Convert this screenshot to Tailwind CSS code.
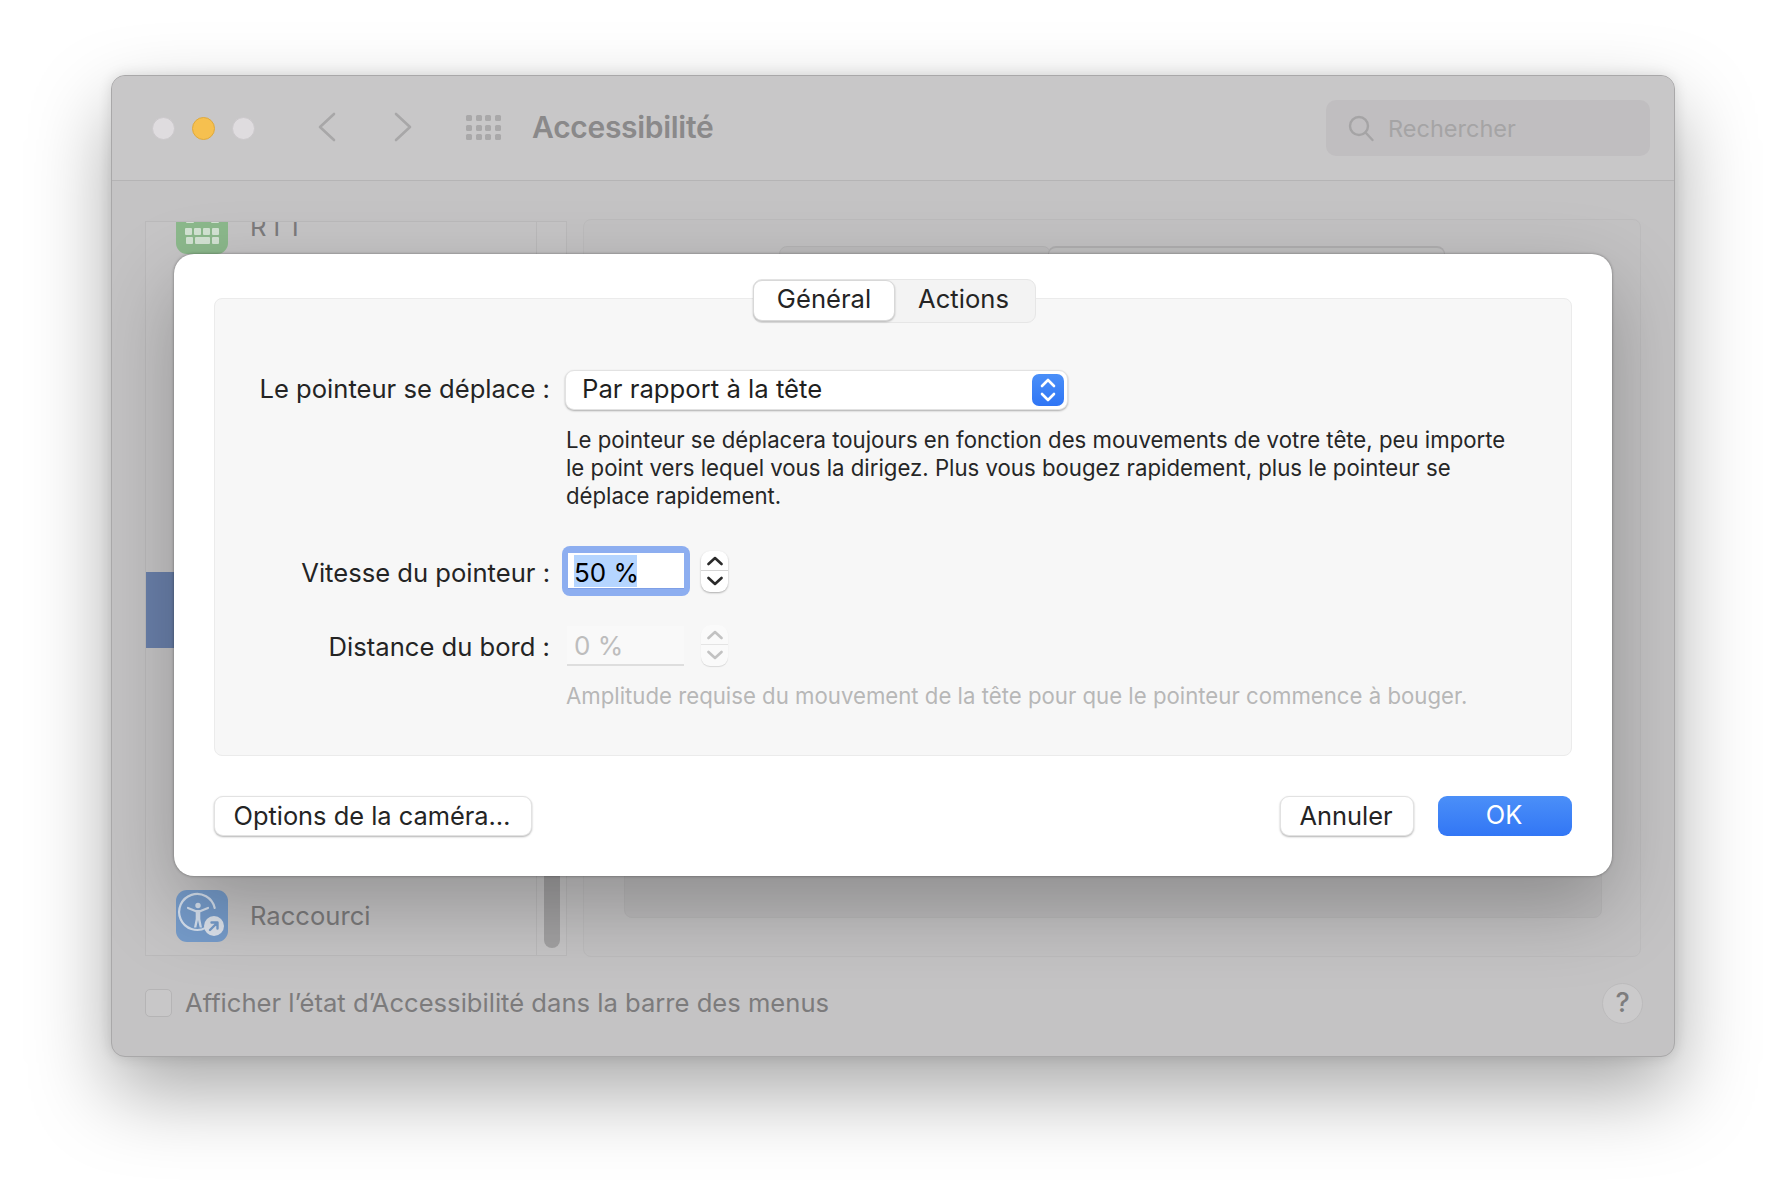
<!DOCTYPE html>
<html lang="fr">
<head>
    <meta charset="UTF-8">
    <title>Accessibilité</title>
    <script src="https://cdn.jsdelivr.net/npm/@tailwindcss/browser@4"></script>
</head>
<body class="bg-white w-[1786px] h-[1204px] overflow-hidden pl-[111px] pt-[75px] font-['Inter','Liberation_Sans',sans-serif] text-[#242424]">

    <!-- fenetre -->
    <div class="relative w-[1564px] h-[982px] rounded-[14px] overflow-hidden flex flex-col bg-[#c4c3c4] border border-[#a9a8a9] shadow-[0_35px_80px_rgba(0,0,0,0.34),0_0_14px_rgba(0,0,0,0.12)]">

        <!-- barre de titre -->
        <div class="h-[105px] shrink-0 flex items-center bg-[#c8c7c8] border-b border-[#b5b4b5] pl-[40px] pr-[24px]">
            <div class="flex gap-[17px]">
                <span class="w-[23px] h-[23px] rounded-full bg-[#dfdcdf] border border-[#cbc8cb]"></span>
                <span class="w-[23px] h-[23px] rounded-full bg-[#f6c04f] border border-[#dfa93c]"></span>
                <span class="w-[23px] h-[23px] rounded-full bg-[#dfdcdf] border border-[#cbc8cb]"></span>
            </div>
            <svg class="ml-[62px] -mt-[2px]" width="20" height="30" viewBox="0 0 20 30" fill="none" stroke="#a8a7a8" stroke-width="2.600" stroke-linecap="round" stroke-linejoin="round"><path d="M17 2 3 15l14 13"/></svg>
            <svg class="ml-[56px] -mt-[2px]" width="20" height="30" viewBox="0 0 20 30" fill="none" stroke="#a8a7a8" stroke-width="2.600" stroke-linecap="round" stroke-linejoin="round"><path d="m3 2 14 13L3 28"/></svg>
            <div class="ml-[53px] -mt-[1px] grid grid-cols-4 gap-x-[3.700px] gap-y-[3.500px]">
                <span class="w-[6px] h-[6px] bg-[#a9a8a9] rounded-[1.500px]"></span><span class="w-[6px] h-[6px] bg-[#a9a8a9] rounded-[1.500px]"></span><span class="w-[6px] h-[6px] bg-[#a9a8a9] rounded-[1.500px]"></span><span class="w-[6px] h-[6px] bg-[#a9a8a9] rounded-[1.500px]"></span>
                <span class="w-[6px] h-[6px] bg-[#a9a8a9] rounded-[1.500px]"></span><span class="w-[6px] h-[6px] bg-[#a9a8a9] rounded-[1.500px]"></span><span class="w-[6px] h-[6px] bg-[#a9a8a9] rounded-[1.500px]"></span><span class="w-[6px] h-[6px] bg-[#a9a8a9] rounded-[1.500px]"></span>
                <span class="w-[6px] h-[6px] bg-[#a9a8a9] rounded-[1.500px]"></span><span class="w-[6px] h-[6px] bg-[#a9a8a9] rounded-[1.500px]"></span><span class="w-[6px] h-[6px] bg-[#a9a8a9] rounded-[1.500px]"></span><span class="w-[6px] h-[6px] bg-[#a9a8a9] rounded-[1.500px]"></span>
            </div>
            <div class="ml-[31px] -mt-[2px] text-[30px] font-semibold text-[#8a898a] tracking-[-0.3px]">Accessibilité</div>
            <div class="ml-auto w-[324px] h-[56px] rounded-[10px] bg-[#c0bec0] flex items-center pl-[21px]">
                <svg width="28" height="28" viewBox="0 0 28 28" fill="none" stroke="#a5a4a5" stroke-width="2.400" stroke-linecap="round"><circle cx="12" cy="12" r="9"/><path d="m18.500 18.500 7 7.500"/></svg>
                <span class="ml-[13px] mt-[2px] text-[23.500px] text-[#a5a4a5]">Rechercher</span>
            </div>
        </div>

        <!-- contenu derriere la feuille -->
        <div class="flex-1 flex flex-col px-[33px]">
            <div class="flex h-[738px] mt-[38px] gap-[16px]">
                <div class="w-[422px] h-[735px] mt-[2px] flex bg-[#c6c5c6] border border-[#bbbabb]">
                    <div class="relative flex-1 border-r border-[#bbbabb] overflow-hidden flex flex-col justify-between">
                        <div class="flex items-start pl-[30px] h-[60px]">
                            <div class="w-[52px] h-[52px] -mt-[20px] shrink-0 rounded-[11px] bg-[#8cb98c] flex flex-col items-center pt-[14px] gap-[2px]">
                                <div class="w-[33px] flex justify-between">
                                    <span class="w-[8px] h-[7px] bg-[#d3e3d3] rounded-[1px]"></span><span class="w-[8px] h-[7px] bg-[#d3e3d3] rounded-[1px]"></span>
                                </div>
                                <div class="mt-[3px] flex gap-[2px]">
                                    <span class="w-[7px] h-[7px] bg-[#d3e3d3] rounded-[1px]"></span><span class="w-[7px] h-[7px] bg-[#d3e3d3] rounded-[1px]"></span><span class="w-[7px] h-[7px] bg-[#d3e3d3] rounded-[1px]"></span><span class="w-[7px] h-[7px] bg-[#d3e3d3] rounded-[1px]"></span>
                                </div>
                                <div class="flex gap-[2px]">
                                    <span class="w-[7px] h-[7px] bg-[#d3e3d3] rounded-[1px]"></span><span class="w-[15px] h-[7px] bg-[#d3e3d3] rounded-[1px]"></span><span class="w-[7px] h-[7px] bg-[#d3e3d3] rounded-[1px]"></span>
                                </div>
                            </div>
                            <span class="ml-[22px] -mt-[9px] text-[25.600px] leading-[28px] tracking-[2px] text-[#7c7b7c]">RTT</span>
                        </div>
                        <div class="absolute left-0 top-[350px] w-[40px] h-[76px] bg-[#6a80ab]"></div>
                        <div class="flex items-center pl-[30px] mb-[13px]">
                            <svg width="52" height="52" viewBox="0 0 52 52" class="rounded-[11px] bg-[#769ccb]">
                                <path d="M30 37.600A18 18 0 1 1 38.700 18" fill="none" stroke="#d5e0ee" stroke-width="2.200" stroke-linecap="round"/>
                                <circle cx="22" cy="15.500" r="2.700" fill="#d5e0ee"/>
                                <path d="M12 18l8 3.200h4l8-3.200" fill="none" stroke="#d5e0ee" stroke-width="2.200" stroke-linecap="round" stroke-linejoin="round"/>
                                <path d="M19.700 21h4.600v8l1.700 8.500h-2.300l-1.700-7.500-1.700 7.500H18l1.700-8.500z" fill="#d5e0ee"/>
                                <circle cx="38" cy="36" r="10" fill="#dde3ec"/>
                                <path d="m34 40 7.500-7.500m-6 0h6v6" fill="none" stroke="#769ccb" stroke-width="2.400" stroke-linecap="round" stroke-linejoin="round"/>
                            </svg>
                            <span class="ml-[22px] text-[25.600px] text-[#7c7b7c]">Raccourci</span>
                        </div>
                    </div>
                    <div class="w-[29px] flex justify-center items-end pb-[7px]">
                        <div class="w-[16px] h-[400px] rounded-full bg-[#a2a1a2]"></div>
                    </div>
                </div>
                <div class="w-[1058px] h-[738px] rounded-[8px] bg-[#c3c2c3] border border-[#bdbcbd] pt-[49px] pl-[40px] pr-[38px]">
                    <div class="relative h-[649px] w-[978px] rounded-[8px] bg-[#bdbcbd] border border-[#b9b8b9]">
                        <div class="absolute -top-[24px] left-[154px] w-[272px] h-[44px] rounded-t-[8px] bg-[#bdbcbd] border border-[#b5b4b5]"></div>
                        <div class="absolute -top-[24px] left-[423px] w-[397px] h-[44px] rounded-t-[8px] bg-[#c1c0c1] border-t-2 border-x border-[#b0afb0]"></div>
                    </div>
                </div>
            </div>
            <div class="flex items-center mt-[26px]">
                <span class="w-[27px] h-[28px] -mt-[2px] rounded-[5px] bg-[#c8c7c8] border border-[#b5b4b5]"></span>
                <span class="ml-[13px] text-[25.600px] text-[#7c7b7c]">Afficher l’état d’Accessibilité dans la barre des menus</span>
                <span class="ml-auto -mr-[2px] w-[41px] h-[41px] rounded-full bg-[#cbcacb] border border-[#bcbbbc] flex items-center justify-center text-[27px] font-medium text-[#7e7d7e]">?</span>
            </div>
        </div>

        <!-- feuille -->
        <div class="absolute left-[62px] top-[177px] mt-[1px] w-[1438px] h-[622px] rounded-[20px] bg-white shadow-[0_30px_80px_rgba(0,0,0,0.26),0_0_3px_rgba(0,0,0,0.4)] px-[40px] pt-[44px]">
            <div class="relative h-[458px] rounded-[8px] bg-[#f7f7f7] border border-[#ebebeb]">
                <div class="absolute -top-[20px] left-[538px] flex h-[44px] w-[283px] rounded-[9px] bg-[#f3f3f3] border border-[#e6e6e6]">
                    <div class="w-[142px] h-[41px] -ml-[1px] pb-[2px] rounded-[9px] bg-white border border-[#d8d8d8] shadow-[0_1px_2px_rgba(0,0,0,0.25)] flex items-center justify-center text-[25.600px]">Général</div>
                    <div class="flex-1 h-[41px] pb-[2px] pr-[3px] flex items-center justify-center text-[25.600px]">Actions</div>
                </div>

                <div class="w-[1000px] pt-[71px] grid grid-cols-[335px_1fr] gap-x-[15px] absolute left-0 top-0">
                    <div class="text-right text-[25.600px] leading-[40px] -mt-[1px]">Le pointeur se déplace :</div>
                    <div class="w-[503px] h-[40px] rounded-[9px] bg-white border border-[#e2e2e2] shadow-[0_1px_2px_rgba(0,0,0,0.3)] flex items-center pl-[16px] pr-[3px] text-[25.700px] text-[#1f1f1f]">
                        <span class="-mt-[2px]">Par rapport à la tête</span>
                        <span class="ml-auto w-[32px] h-[32px] rounded-[7px] bg-gradient-to-b from-[#4a8ff8] to-[#2f75f5] flex items-center justify-center">
                            <svg width="18" height="26" viewBox="0 0 18 26" fill="none" stroke="#fff" stroke-width="2.600" stroke-linecap="round" stroke-linejoin="round"><path d="m3 9 6-6 6 6M3 17l6 6 6-6"/></svg>
                        </span>
                    </div>
                </div>

                <div class="absolute left-[351px] top-[127px] w-[1000px] text-[22.200px] leading-[28px] text-[#262626]">Le pointeur se déplacera toujours en fonction des mouvements de votre tête, peu importe<br>le point vers lequel vous la dirigez. Plus vous bougez rapidement, plus le pointeur se<br>déplace rapidement.</div>

                <div class="absolute left-0 top-[249px] w-[335px] text-right text-[25.600px] leading-[50px]">Vitesse du pointeur :</div>
                <div class="absolute left-[347px] top-[247px] w-[128px] h-[50px] rounded-[8px] bg-[#8daef0] px-[6px] py-[7px]">
                    <div class="w-full h-full bg-white border-b border-[#7f9fe6] flex items-center pl-[6px] text-[26px] text-black">
                        <span class="bg-[#b5d5ff] h-[32px] leading-[36px] w-[63px] whitespace-nowrap">50 %</span>
                    </div>
                </div>
                <div class="absolute left-[486px] top-[252px] w-[27px] h-[41px] rounded-[9px] bg-white shadow-[0_1px_2px_rgba(0,0,0,0.3)] flex flex-col items-center">
                    <svg class="mt-[5px]" width="16" height="10" viewBox="0 0 16 10" fill="none" stroke="#2a2a2a" stroke-width="2.600" stroke-linecap="round" stroke-linejoin="round"><path d="m1.500 8 6.500-6 6.500 6"/></svg>
                    <div class="w-full h-[1px] bg-[#d5d5d5] mt-[4px]"></div>
                    <svg class="mt-[5px]" width="16" height="10" viewBox="0 0 16 10" fill="none" stroke="#2a2a2a" stroke-width="2.600" stroke-linecap="round" stroke-linejoin="round"><path d="m1.500 2 6.500 6 6.500-6"/></svg>
                </div>

                <div class="absolute left-0 top-[328px] w-[335px] text-right text-[25.600px] leading-[40px]">Distance du bord :</div>
                <div class="absolute left-[352px] top-[327px] w-[117px] h-[40px] bg-[#f9f9f9] border-b-2 border-[#dedede] flex items-center pl-[7px] text-[26px] text-[#bdbdbd]">0 %</div>
                <div class="absolute left-[486px] top-[326px] w-[27px] h-[41px] rounded-[9px] bg-[#fafafa] shadow-[0_1px_1px_rgba(0,0,0,0.12)] flex flex-col items-center">
                    <svg class="mt-[5px]" width="16" height="10" viewBox="0 0 16 10" fill="none" stroke="#c2c2c2" stroke-width="2.600" stroke-linecap="round" stroke-linejoin="round"><path d="m1.500 8 6.500-6 6.500 6"/></svg>
                    <div class="w-full h-[1px] bg-[#e4e4e4] mt-[4px]"></div>
                    <svg class="mt-[5px]" width="16" height="10" viewBox="0 0 16 10" fill="none" stroke="#c2c2c2" stroke-width="2.600" stroke-linecap="round" stroke-linejoin="round"><path d="m1.500 2 6.500 6 6.500-6"/></svg>
                </div>
                <div class="absolute left-[351px] top-[383px] whitespace-nowrap text-[22.200px] leading-[28px] text-[#b7b7b7]">Amplitude requise du mouvement de la tête pour que le pointeur commence à bouger.</div>
            </div>

            <div class="flex items-center mt-[40px]">
                <button class="w-[318px] h-[40px] pb-[3px] pr-[2px] rounded-[9px] bg-white border border-[#e2e2e2] shadow-[0_1px_2px_rgba(0,0,0,0.3)] text-[25.400px]">Options de la caméra…</button>
                <button class="ml-auto w-[134px] h-[40px] pb-[3px] pr-[2px] rounded-[9px] bg-white border border-[#e2e2e2] shadow-[0_1px_2px_rgba(0,0,0,0.3)] text-[25.400px]">Annuler</button>
                <button class="ml-[24px] w-[134px] h-[40px] pb-[2px] pr-[2px] rounded-[9px] bg-gradient-to-b from-[#4b8ff8] to-[#3276f5] text-white text-[25.400px]">OK</button>
            </div>
        </div>
    </div>
</body>
</html>
